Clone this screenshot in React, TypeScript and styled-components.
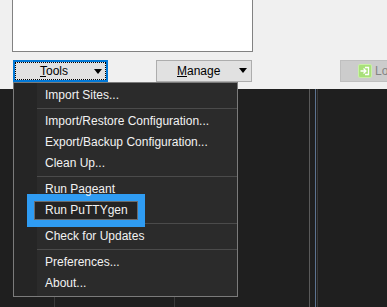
import React from "react";
import styled, { createGlobalStyle } from "styled-components";

const GlobalStyle = createGlobalStyle`
  html, body { margin: 0; padding: 0; background: #f0f0f0; }
  body { font-family: "Liberation Sans", Arial, sans-serif; font-size: 12px; }
`;

const Window = styled.div`
  position: relative;
  width: 387px;
  height: 307px;
  overflow: hidden;
  background: #f0f0f0;
`;

const TopPanel = styled.div`
  height: 89px;
  background: #f0f0f0;
  display: flex;
  flex-direction: column;
`;

const ListBox = styled.div`
  margin-left: 12px;
  width: 239px;
  height: 51px;
  background: #ffffff;
  border: 1px solid #828282;
  border-top: none;
`;

const ButtonRow = styled.div`
  display: flex;
  align-items: center;
  margin-top: 8px;
  height: 22px;
`;

const Button = styled.div<{ $focused?: boolean; $disabled?: boolean; $width: number; $gap: number }>`
  position: relative;
  box-sizing: border-box;
  width: ${(p) => p.$width}px;
  height: 22px;
  margin-left: ${(p) => p.$gap}px;
  flex-shrink: 0;
  display: flex;
  align-items: center;
  background: ${(p) => (p.$disabled ? "#cccccc" : "#e1e1e1")};
  border: ${(p) => (p.$focused ? "2px solid #0078d7" : p.$disabled ? "1px solid #bfbfbf" : "1px solid #adadad")};
  color: ${(p) => (p.$disabled ? "#838383" : "#000")};
  font-size: 12px;
  ${(p) =>
    p.$focused
      ? `&::after { content: ""; position: absolute; inset: 0; border: 1px dotted #000; }`
      : ""}
`;

const Label = styled.span<{ $left: number }>`
  position: absolute;
  left: ${(p) => p.$left}px;
  top: 50%;
  transform: translateY(-50%);
  white-space: nowrap;
`;

const Mnemonic = styled.span`
  text-decoration: underline;
`;

const Arrow = styled.span<{ $right: number }>`
  position: absolute;
  right: ${(p) => p.$right}px;
  top: 7px;
  width: 0;
  height: 0;
  border-left: 4.5px solid transparent;
  border-right: 4.5px solid transparent;
  border-top: 5px solid #000;
`;

const DarkArea = styled.div`
  height: 218px;
  background: #1f1f1f;
  display: flex;
`;

const Column = styled.div<{ $width: number; $line: string }>`
  width: ${(p) => p.$width}px;
  flex-shrink: 0;
  border-right: 1px solid ${(p) => p.$line};
`;

const Menu = styled.div`
  position: absolute;
  left: 13px;
  top: 82px;
  width: 225px;
  box-sizing: border-box;
  border: 1px solid #7b7b7b;
  background: linear-gradient(to right, #252525 0, #252525 23px, #2b2b2b 23px);
  padding: 2px 0;
  color: #f2f2f2;
`;

const Item = styled.div`
  position: relative;
  height: 21px;
  line-height: 21px;
  padding-left: 31px;
  white-space: nowrap;
  font-size: 12px;
`;

const ItemText = styled.span`
  position: relative;
  z-index: 2;
`;

const Separator = styled.div`
  height: 1px;
  margin: 2px 0 2px 23px;
  background: #4b4b4b;
`;

const Annotation = styled.div`
  position: absolute;
  left: 13px;
  top: -6px;
  width: 104px;
  height: 19px;
  border: 7px solid #2f9cf3;
  z-index: 1;
  &::after {
    content: "";
    position: absolute;
    inset: 0;
    border: 1px solid #6b6b6b;
    background: #242424;
  }
`;

const LoginIcon = styled.svg`
  position: absolute;
  left: 17px;
  top: 3px;
`;

const items: (string | null)[] = [
  "Import Sites...",
  null,
  "Import/Restore Configuration...",
  "Export/Backup Configuration...",
  "Clean Up...",
  null,
  "Run Pageant",
  "Run PuTTYgen",
  null,
  "Check for Updates",
  null,
  "Preferences...",
  "About...",
];

export default function App() {
  return (
    <>
      <GlobalStyle />
      <Window>
        <TopPanel>
          <ListBox />
          <ButtonRow>
            <Button $focused $width={95} $gap={13}>
              <Label $left={25}>
                <Mnemonic>T</Mnemonic>ools
              </Label>
              <Arrow $right={4} />
            </Button>
            <Button $width={96} $gap={48}>
              <Label $left={20}>
                <Mnemonic>M</Mnemonic>anage
              </Label>
              <Arrow $right={4} />
            </Button>
            <Button $disabled $width={60} $gap={88}>
              <LoginIcon width="14" height="14" viewBox="0 0 14 14">
                <rect x="0.5" y="0.5" width="13" height="13" rx="1.5" fill="#a8e07a" stroke="#c9f0a6" />
                <path d="M7 3.5h3.5v7H7" fill="none" stroke="#ffffff" strokeWidth="1.3" />
                <path d="M2.5 7h5M5.5 4.5L8 7l-2.5 2.5" fill="none" stroke="#ffffff" strokeWidth="1.3" />
              </LoginIcon>
              <Label $left={34}>Login</Label>
            </Button>
          </ButtonRow>
        </TopPanel>
        <DarkArea>
          <Column $width={54} $line="#3a3a3a" />
          <Column $width={119} $line="#3a3a3a" />
          <Column $width={134} $line="#5a5a5a" />
          <Column $width={5} $line="#5d7390" />
          <Column $width={1} $line="#3c3c3c" />
        </DarkArea>
        <Menu>
          {items.map((it, i) =>
            it === null ? (
              <Separator key={i} />
            ) : (
              <Item key={i}>
                {it === "Run PuTTYgen" && <Annotation />}
                <ItemText>{it}</ItemText>
              </Item>
            )
          )}
        </Menu>
      </Window>
    </>
  );
}
